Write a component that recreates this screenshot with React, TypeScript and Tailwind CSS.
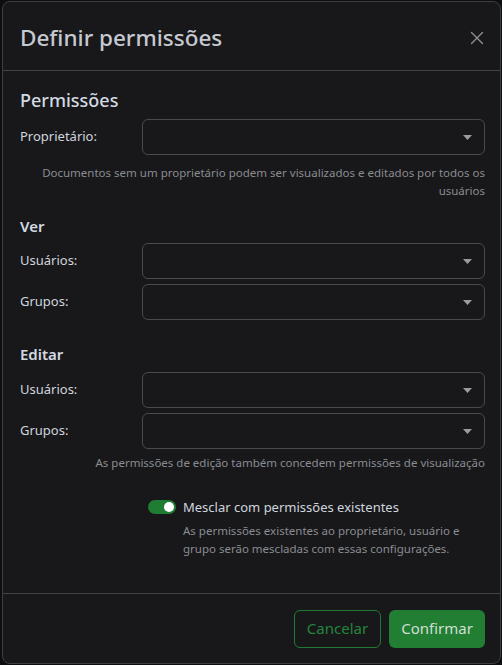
import { X } from "lucide-react";

const font = { fontFamily: '"Noto Sans", "Segoe UI", sans-serif' };

function Caret() {
  return (
    <svg width="9" height="5" viewBox="0 0 9 5" className="shrink-0">
      <path d="M0 0h9L4.5 5z" fill="#9a9b9e" />
    </svg>
  );
}

function SelectRow({ label }: { label: string }) {
  return (
    <div className="flex items-center">
      <label className="w-[122px] shrink-0 text-[13px] text-[#cfd5dc]">{label}</label>
      <div className="flex-1 h-[36px] rounded-[6px] border border-[#4a4a4e] flex items-center justify-end pr-[12px]">
        <Caret />
      </div>
    </div>
  );
}

export default function App() {
  return (
    <div className="w-[502px] h-[665px] bg-[#0d0e0f] pt-[1px] pl-[2px]" style={font}>
      <div className="w-[499px] h-[663px] bg-[#18181b] border border-[#3e3e42] rounded-[8px] flex flex-col overflow-hidden">
        {/* Header */}
        <div className="h-[69px] shrink-0 border-b border-[#434347] flex items-center justify-between pl-[17px] pr-[14px] pt-[4px]">
          <h4 className="text-[22.5px] font-medium text-[#c6cad0]">Definir permissões</h4>
          <X className="w-[22px] h-[22px] text-[#8e8f93] mr-[-2px]" strokeWidth={1.5} />
        </div>

        {/* Body */}
        <div className="flex-1 pt-[17px] pl-[17px] pr-[15px]">
          <h5 className="text-[18px] leading-[24px] font-medium text-[#d3dae2]">Permissões</h5>
          <div className="mt-[7px]">
            <SelectRow label="Proprietário:" />
          </div>
          <p className="mt-[9px] text-[11.5px] leading-[18px] text-[#8a8c90] text-right pl-[20px]">
            Documentos sem um proprietário podem ser visualizados e editados por todos os usuários
          </p>

          <h6 className="mt-[16px] text-[15px] leading-[20px] font-semibold text-[#d3dae2]">Ver</h6>
          <div className="mt-[7px] flex flex-col gap-[5px]">
            <SelectRow label="Usuários:" />
            <SelectRow label="Grupos:" />
          </div>

          <h6 className="mt-[24px] text-[15px] leading-[20px] font-semibold text-[#d3dae2]">Editar</h6>
          <div className="mt-[8px] flex flex-col gap-[5px]">
            <SelectRow label="Usuários:" />
            <SelectRow label="Grupos:" />
          </div>
          <p className="mt-[5px] text-[11.5px] leading-[18px] text-[#8a8c90] text-right">
            As permissões de edição também concedem permissões de visualização
          </p>

          <div className="mt-[25px] pl-[128px] flex items-center gap-[7px]">
            <div className="w-[28px] h-[14px] rounded-full bg-[#1f7d33] flex items-center justify-end pr-[2px]">
              <div className="w-[10px] h-[10px] rounded-full bg-white" />
            </div>
            <span className="text-[13px] leading-[20px] text-[#cfd5dc]">Mesclar com permissões existentes</span>
          </div>
          <p className="mt-[5px] ml-[163px] w-[280px] text-[11.5px] leading-[18px] text-[#8a8c90]">
            As permissões existentes ao proprietário, usuário e grupo serão mescladas com essas configurações.
          </p>
        </div>

        {/* Footer */}
        <div className="h-[70px] shrink-0 border-t border-[#434347] flex items-center justify-end gap-[8px] pr-[15px]">
          <button className="h-[38px] w-[87px] rounded-[6px] border border-[#1f7b32] text-[15px] text-[#23853a]">
            Cancelar
          </button>
          <button className="h-[38px] w-[96px] rounded-[6px] bg-[#217e33] text-[15px] text-[#d2ded4]">
            Confirmar
          </button>
        </div>
      </div>
    </div>
  );
}
